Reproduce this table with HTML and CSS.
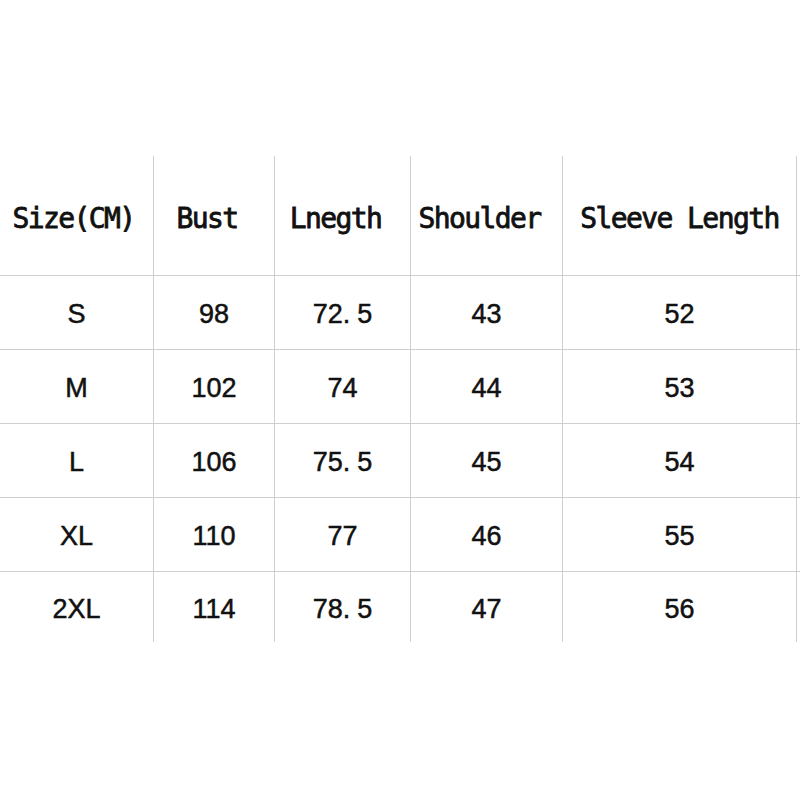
FILE: index.html
```html
<!DOCTYPE html>
<html>
<head>
<meta charset="utf-8">
<link rel="stylesheet" href="styles.css">
</head>
<body>
<div class="sheet">
  <div class="cell head nudge">Size(CM)</div>
  <div class="cell head shift">Bust</div>
  <div class="cell head shift">Lnegth</div>
  <div class="cell head shift">Shoulder</div>
  <div class="cell head">Sleeve Length</div>
  <div class="cell edge"></div>

  <div class="cell">S</div>
  <div class="cell">98</div>
  <div class="cell">72<span class="dot">.</span>5</div>
  <div class="cell">43</div>
  <div class="cell">52</div>
  <div class="cell edge"></div>

  <div class="cell">M</div>
  <div class="cell">102</div>
  <div class="cell">74</div>
  <div class="cell">44</div>
  <div class="cell">53</div>
  <div class="cell edge"></div>

  <div class="cell">L</div>
  <div class="cell">106</div>
  <div class="cell">75<span class="dot">.</span>5</div>
  <div class="cell">45</div>
  <div class="cell">54</div>
  <div class="cell edge"></div>

  <div class="cell">XL</div>
  <div class="cell">110</div>
  <div class="cell">77</div>
  <div class="cell">46</div>
  <div class="cell">55</div>
  <div class="cell edge"></div>

  <div class="cell last">2XL</div>
  <div class="cell last">114</div>
  <div class="cell last">78<span class="dot">.</span>5</div>
  <div class="cell last">47</div>
  <div class="cell last">56</div>
  <div class="cell edge last"></div>
</div>
</body>
</html>
```
FILE: styles.css
```css
html, body {
  margin: 0;
  padding: 0;
  background: #ffffff;
}

body {
  padding-top: 156px;
}

.sheet {
  display: grid;
  grid-template-columns: 154px 121px 136px 152px 234px 3px;
  grid-template-rows: 120px 74px 74px 74px 74px 70px;
  width: 800px;
}

.cell {
  display: flex;
  align-items: center;
  justify-content: center;
  border-right: 1px solid #cfcfcf;
  border-bottom: 1px solid #cfcfcf;
  font-family: "Liberation Sans", Arial, sans-serif;
  font-size: 27px;
  color: #111111;
  -webkit-text-stroke: 0.5px #111111;
  padding-top: 4px;
}

.cell.last {
  border-bottom: none;
}

.cell.edge {
  border-right: none;
}

.head {
  font-family: "DejaVu Sans Mono", monospace;
  font-weight: normal;
  font-size: 28px;
  letter-spacing: -1.6px;
  -webkit-text-stroke: 0.8px #111111;
  padding-top: 6px;
}

.head.shift {
  padding-right: 14px;
}

.head.nudge {
  padding-right: 6px;
}

.dot {
  margin-right: 7px;
}
```
